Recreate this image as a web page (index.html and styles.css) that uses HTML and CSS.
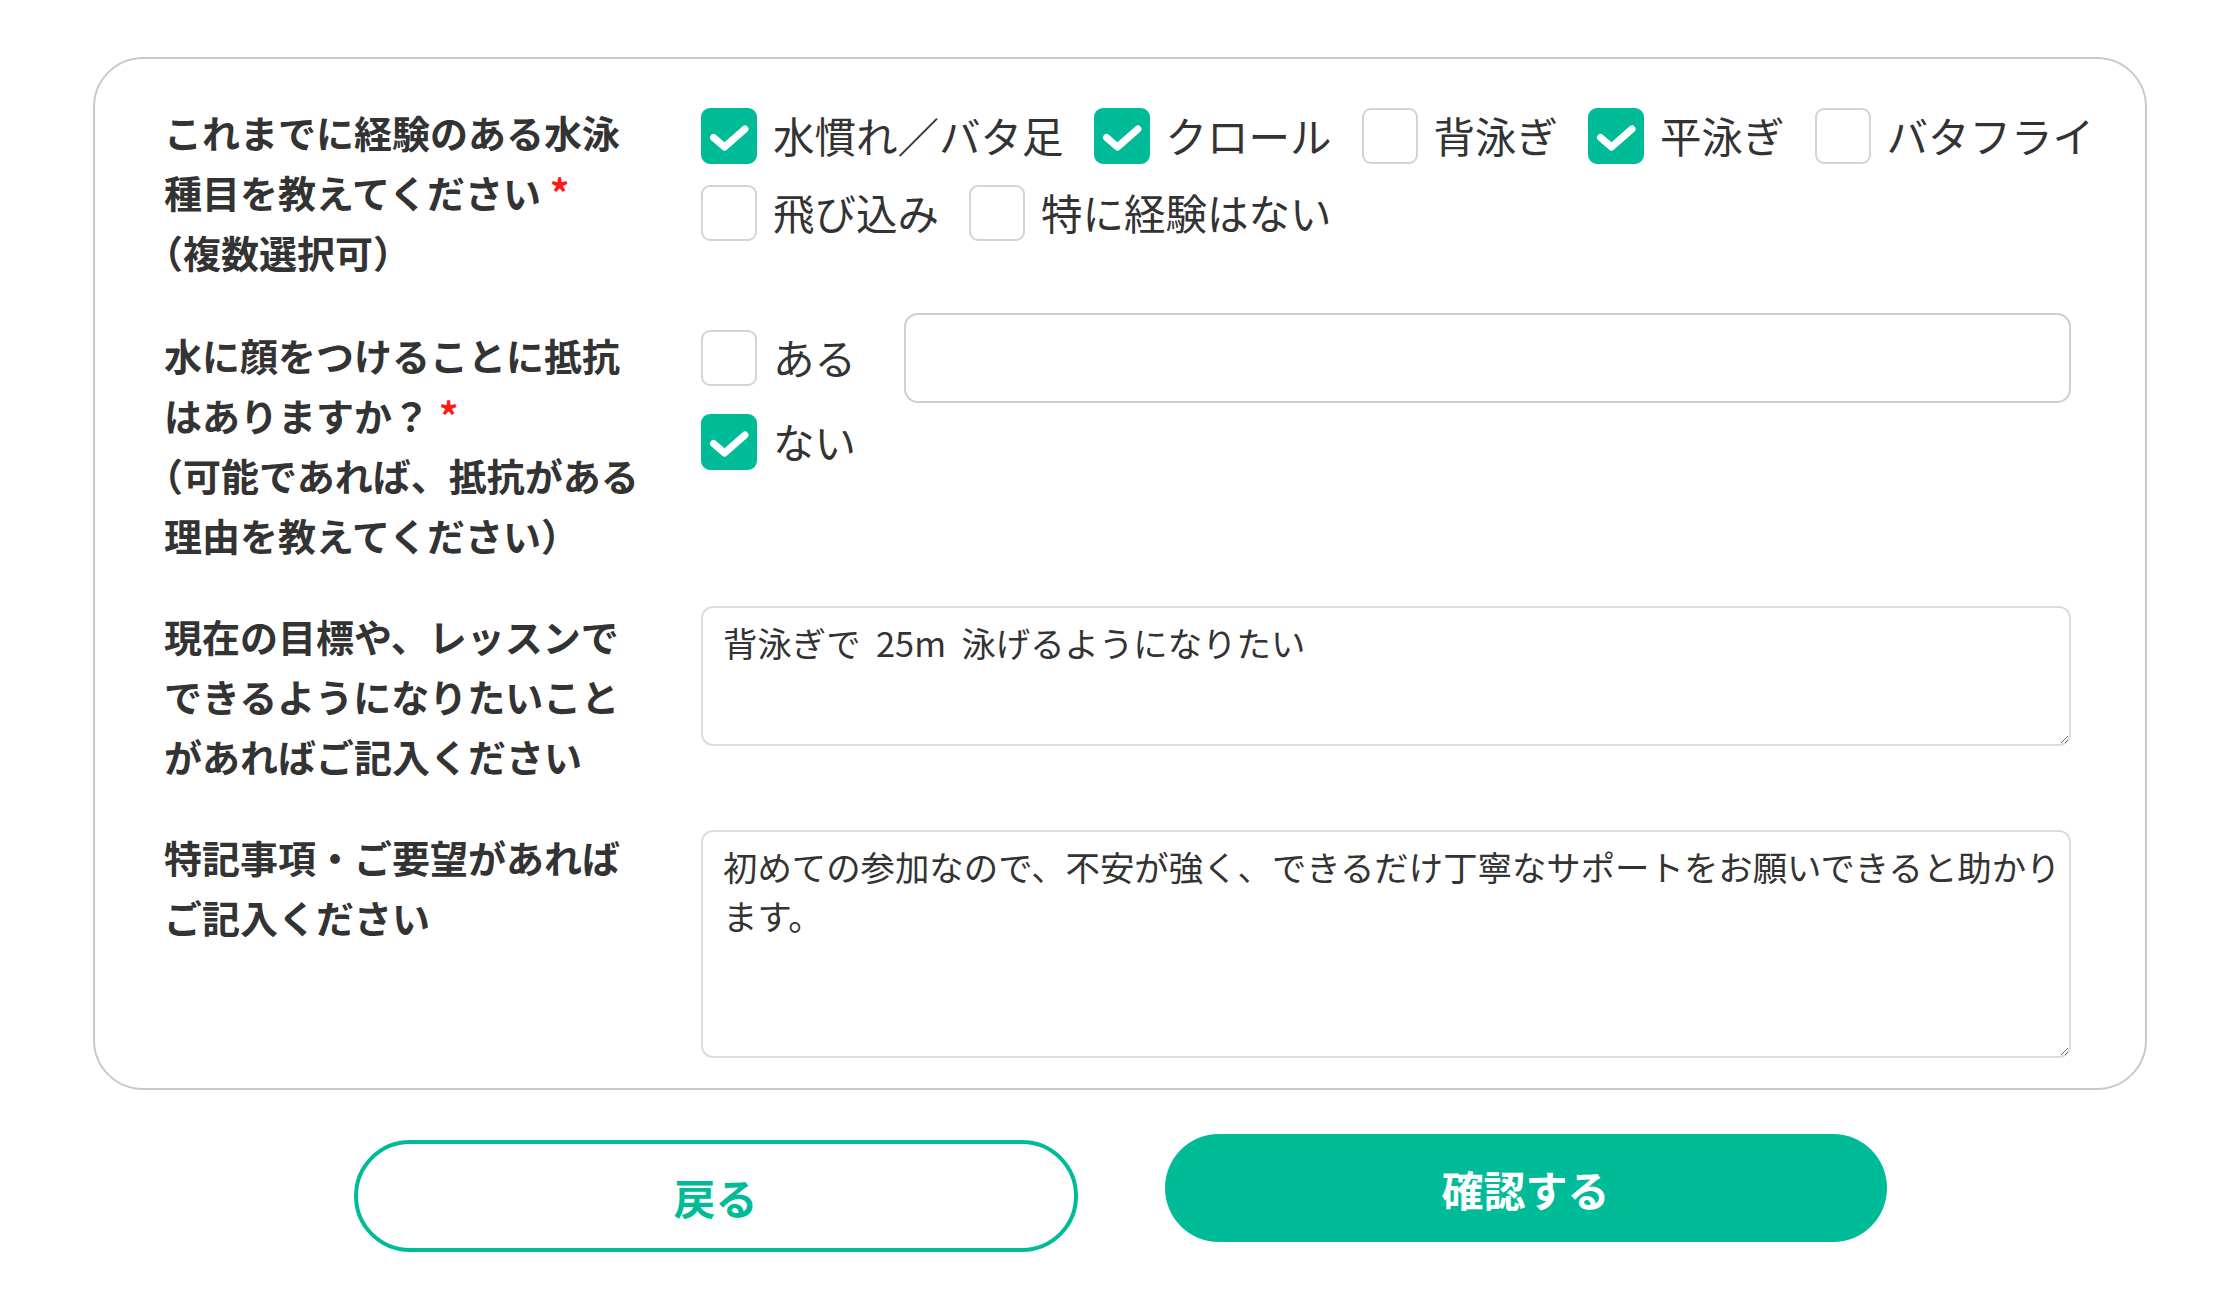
FILE: index.html
```html
<!DOCTYPE html>
<html lang="ja">
<head>
<meta charset="utf-8">
<title>フォーム</title>
<link rel="stylesheet" href="styles.css">
</head>
<body>
<div class="card">
  <div class="row">
    <div class="label">これまでに経験のある水泳種目を教えてください<span class="req">*</span><br><span class="halt">（</span>複数選択可）</div>
    <div class="control">
      <div class="opt-line">
        <label class="opt"><span class="box on"><svg viewBox="0 0 56 56"><path d="M12.5 29.5 L23.5 39 L44 21"/></svg></span><span class="txt">水慣れ／バタ足</span></label>
        <label class="opt"><span class="box on"><svg viewBox="0 0 56 56"><path d="M12.5 29.5 L23.5 39 L44 21"/></svg></span><span class="txt">クロール</span></label>
        <label class="opt"><span class="box"></span><span class="txt">背泳ぎ</span></label>
        <label class="opt"><span class="box on"><svg viewBox="0 0 56 56"><path d="M12.5 29.5 L23.5 39 L44 21"/></svg></span><span class="txt">平泳ぎ</span></label>
        <label class="opt"><span class="box"></span><span class="txt">バタフライ</span></label>
      </div>
      <div class="opt-line second">
        <label class="opt"><span class="box"></span><span class="txt">飛び込み</span></label>
        <label class="opt"><span class="box"></span><span class="txt">特に経験はない</span></label>
      </div>
    </div>
  </div>

  <div class="row row-2">
    <div class="label pad">水に顔をつけることに抵抗はありますか？<span class="req">*</span><br><span class="halt">（</span>可能であれば、抵抗がある理由を教えてください）</div>
    <div class="control">
      <div class="yes-line">
        <label class="opt"><span class="box"></span><span class="txt">ある</span></label>
        <input class="reason" type="text">
      </div>
      <div class="no-line">
        <label class="opt"><span class="box on"><svg viewBox="0 0 56 56"><path d="M12.5 29.5 L23.5 39 L44 21"/></svg></span><span class="txt">ない</span></label>
      </div>
    </div>
  </div>

  <div class="row row-3">
    <div class="label">現在の目標や、レッスンでできるようになりたいことがあればご記入ください</div>
    <div class="control">
      <textarea class="area goal">背泳ぎで  25m  泳げるようになりたい</textarea>
    </div>
  </div>

  <div class="row row-4">
    <div class="label">特記事項・ご要望があればご記入ください</div>
    <div class="control">
      <textarea class="area notes">初めての参加なので、不安が強く、できるだけ丁寧なサポートをお願いできると助かります。</textarea>
    </div>
  </div>
</div>

<div class="actions">
  <button class="btn back" type="button">戻る</button>
  <button class="btn confirm" type="button">確認する</button>
</div>
</body>
</html>
```

FILE: styles.css
```css
* {
  box-sizing: border-box;
}

html, body {
  margin: 0;
  padding: 0;
  background: #ffffff;
}

body {
  font-family: "Noto Sans CJK JP", "Noto Sans", sans-serif;
  color: #333333;
}

.card {
  width: 2054px;
  margin: 57px auto 0;
  border: 2px solid #c9c9c9;
  border-radius: 50px;
  padding: 43px 74px 30px 69px;
  background: #ffffff;
}

.row {
  display: grid;
  grid-template-columns: 480px 1fr;
  column-gap: 57px;
  align-items: start;
}

.row-2 {
  margin-top: 31px;
}

.row-3 {
  margin-top: 41px;
}

.row-4 {
  margin-top: 41px;
}

.label {
  font-size: 38px;
  font-weight: 700;
  line-height: 60px;
  color: #333333;
}

.label.pad {
  padding-top: 12px;
}

.halt {
  font-feature-settings: "halt" 1;
}

.req {
  color: #ff1a1a;
  margin-left: 9px;
}

.control {
  min-width: 0;
}

.opt-line {
  display: flex;
  flex-wrap: nowrap;
  align-items: center;
  gap: 30px;
  height: 68px;
}

.opt-line.second {
  margin-top: 9px;
}

.opt {
  display: flex;
  align-items: center;
  flex-shrink: 0;
  white-space: nowrap;
  gap: 16px;
}

.box {
  width: 56px;
  height: 56px;
  flex-shrink: 0;
  border: 2px solid #d4d4d4;
  border-radius: 9px;
  background: #ffffff;
  display: block;
}

.box.on {
  background: #00bb98;
  border-color: #00bb98;
}

.box svg {
  display: block;
  width: 56px;
  height: 56px;
  margin: -2px;
}

.box svg path {
  fill: none;
  stroke: #ffffff;
  stroke-width: 7;
  stroke-linecap: round;
  stroke-linejoin: round;
}

.txt {
  font-size: 41.5px;
  line-height: 1;
  color: #333333;
}

.yes-line {
  display: flex;
  align-items: center;
  height: 90px;
}

.reason {
  flex: 1;
  height: 90px;
  margin-left: 48px;
  border: 2px solid #cfcfcf;
  border-radius: 14px;
  background: #ffffff;
  font-family: "Noto Sans CJK JP", sans-serif;
  font-size: 34px;
  padding: 0 20px;
  outline: none;
}

.no-line {
  display: flex;
  align-items: center;
  height: 56px;
  margin-top: 11px;
}

.area {
  display: block;
  width: 100%;
  border: 2px solid #dddddd;
  border-radius: 12px;
  padding: 10px 2px 10px 20px;
  font-family: "Noto Sans CJK JP", sans-serif;
  font-size: 34.4px;
  line-height: 49px;
  color: #333333;
  background: #ffffff;
  resize: vertical;
  outline: none;
}

.area.goal {
  height: 140px;
}

.area.notes {
  height: 228px;
  margin-top: 3px;
}

.actions {
  display: flex;
  justify-content: center;
  align-items: flex-start;
  gap: 87px;
  margin-top: 44px;
}

.btn {
  font-family: "Noto Sans CJK JP", sans-serif;
  font-size: 42px;
  font-weight: 700;
  border-radius: 60px;
  cursor: pointer;
  padding: 0;
}

.back {
  width: 724px;
  height: 112px;
  margin-top: 6px;
  background: #ffffff;
  border: 4px solid #00bb98;
  color: #00bb98;
}

.confirm {
  width: 722px;
  height: 108px;
  background: #00bb98;
  border: none;
  color: #ffffff;
}
```
